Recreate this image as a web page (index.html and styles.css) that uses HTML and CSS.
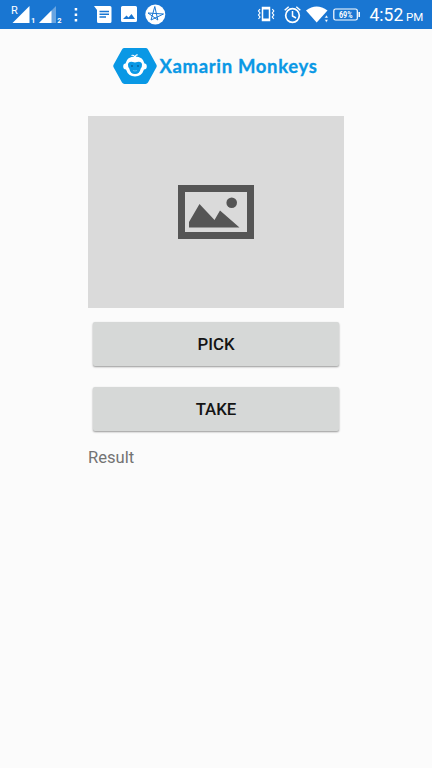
FILE: index.html
```html
<!DOCTYPE html>
<html lang="en">
<head>
<meta charset="utf-8">
<meta name="viewport" content="width=device-width, initial-scale=1">
<title>Xamarin Monkeys</title>
<link rel="stylesheet" href="styles.css">
</head>
<body>
<header class="status">
  <svg class="status-left" width="170" height="29" viewBox="0 0 170 29" fill="#fff">
    <text class="sim" x="11" y="14">R</text>
    <path d="M12.500 23L29.500 6v17z"/>
    <text class="num" x="31" y="23">1</text>
    <path d="M39 23L56 6v17z" opacity=".35"/>
    <path d="M39 23L51.500 10.500V23z"/>
    <text class="num" x="57.300" y="23">2</text>
    <path d="M74.700 8h2.500v2.500h-2.500zM74.700 13.500h2.500V16h-2.500zM74.700 19h2.500v2.500h-2.500z"/>
    <path fill-rule="evenodd" d="M94 6h16q1.500 0 1.500 1.500v14q0 1.500-1.500 1.500H98.500Q97 23 97 21.500V10zM99.500 10.700v1.500h9.500v-1.500zM99.500 13.500V15h9.500v-1.500zM99.500 16.300v1.500h6.500v-1.500z"/>
    <path fill-rule="evenodd" d="M122.500 6h13q1.500 0 1.500 1.500v13q0 1.500-1.500 1.500h-13q-1.500 0-1.500-1.500v-13Q121 6 122.500 6zM123 19h12l-3.500-5-3 3.500-2-2z"/>
    <circle cx="155.300" cy="14.500" r="10"/>
    <path d="M154.800 6.500l3 13.500-9.800-7 15.500 1-12.500 6z" fill="none" stroke="#1976d2"/>
  </svg>
  <svg class="status-right" width="110" height="29" viewBox="254 0 110 29" fill="none" stroke="#fff">
    <path d="M262.500 7.500h7v13h-7zM262 8.700h8M262 19.300h8" stroke-width="1.500"/>
    <path d="M260 9l-1.500 2 1.500 2-1.500 2 1.500 2-1.500 2M272.300 9l1.500 2-1.500 2 1.500 2-1.500 2 1.500 2" stroke-width="1.200"/>
    <circle cx="292.500" cy="15.500" r="6.800" stroke-width="1.700"/>
    <path d="M292.500 11v5l3.500 2M284.700 10.300l4-3.500M300.300 10.300l-4-3.500" stroke-width="1.500"/>
    <path d="M306 10.500q10.500-8 21.500 0L316.700 22.500z" fill="#fff" stroke="none"/>
    <path d="M324.500 18l1.900-3 1.900 3zM324.500 19.500l1.900 3 1.900-3z" fill="#fff" stroke="#1976d2" stroke-width=".5"/>
    <rect x="333.800" y="9" width="23.500" height="11" rx="1.800" stroke-width="1.200"/>
    <path d="M359.200 12v5" stroke-width="1.500"/>
    <text class="charge" x="339" y="17.800" textLength="13.500" lengthAdjust="spacingAndGlyphs">69%</text>
  </svg>
  <time class="clock">4:52 <span class="period">PM</span></time>
</header>
<main class="page">
  <div class="brand">
    <svg width="44" height="36" viewBox="0 0 44 36">
      <path d="M11.500 0h21q1.700 0 2.500 1.400l8.300 15q.9 1.600 0 3.200l-8.300 15Q34.200 36 32.500 36h-21Q9.800 36 9 34.600L.7 19.600q-.9-1.600 0-3.200L9 1.400Q9.800 0 11.500 0z" fill="#0998e5"/>
      <path d="M22 8.500Q30 8.500 31.500 15.500q2.300.2 2.300 3T31 21.500q-2.300 7-9 7t-9-7q-2.800 0-2.800-3t2.300-3Q14 8.500 22 8.500z" fill="#fff"/>
      <path d="M22 9.500Q21 6.500 18.500 7.500M22 9.500q.5-3 2.700-2.500" fill="none" stroke="#fff" stroke-width="1.200"/>
      <path d="M22 14.500q6.500-2.300 7 2 .2 2.200-1.300 4Q26.700 26 22 26t-5.700-5.500q-1.500-1.800-1.300-4 .5-4.300 7-2z" fill="#0998e5"/>
      <circle cx="19" cy="18" r=".9" fill="#075f98"/><circle cx="25" cy="18" r=".9" fill="#075f98"/>
      <path d="M20 22.500q2 1 4 0" stroke="#70c5f1" fill="none" stroke-width=".8"/>
    </svg>
    <svg class="wordmark" width="160" height="36" viewBox="0 0 160 36">
      <text x="1.500" y="24.500" textLength="157.500" lengthAdjust="spacing">Xamarin Monkeys</text>
    </svg>
  </div>
  <div class="preview">
    <svg width="76" height="54" viewBox="0 0 76 54" fill="#555">
      <path fill-rule="evenodd" d="M0 0h76v54H0zM7 7v40h62V7z"/>
      <path d="M11 42.500V37L21.500 19l15 16L42 25.500l19.500 17z"/>
      <circle cx="53.700" cy="17.700" r="5.300"/>
    </svg>
  </div>
  <button class="action">PICK</button>
  <button class="action">TAKE</button>
  <p class="result">Result</p>
</main>
</body>
</html>
```
FILE: styles.css
```css
* { box-sizing: border-box; }
body {
  margin: 0;
  min-height: 768px;
  background: #fbfbfb;
  font-family: Roboto, "Liberation Sans", sans-serif;
}
svg { display: block; flex: none; }
.status {
  display: flex;
  height: 29px;
  background: #1976d2;
  color: #fff;
}
.status-right { margin-left: 84px; }
.sim { font-size: 11px; }
.num { font-size: 7.500px; font-weight: 700; }
.charge { font-size: 9px; font-weight: 700; fill: #fff; stroke: none; }
.clock {
  margin-left: 5.500px;
  font-size: 17.500px;
  line-height: 30px;
  white-space: nowrap;
}
.period { font-size: 11.500px; margin-left: -1.500px; }
.page {
  width: 256px;
  margin: 0 auto;
  padding-top: 19px;
  display: flex;
  flex-direction: column;
}
.brand { display: flex; margin: 0 0 32px 25px; }
.wordmark { margin-left: 1px; fill: #0998e5; overflow: visible; }
.wordmark text {
  font-family: Lato, sans-serif;
  font-size: 18.500px;
  font-weight: 700;
  stroke: #0998e5;
  stroke-width: .3px;
}
.preview {
  display: flex;
  align-items: center;
  justify-content: center;
  height: 192px;
  background: #dadada;
  margin-bottom: 14px;
}
.action {
  height: 44px;
  margin: 0 5px 21px;
  padding: 0;
  border: 0;
  border-radius: 2px;
  background: #d6d8d7;
  box-shadow: 0 1px 2px rgba(0, 0, 0, .4);
  color: #141414;
  font: 500 16.800px/44px Roboto, sans-serif;
}
.result {
  margin: -4px 0 0;
  color: #737373;
  font-size: 16.600px;
  line-height: 20px;
}
```
